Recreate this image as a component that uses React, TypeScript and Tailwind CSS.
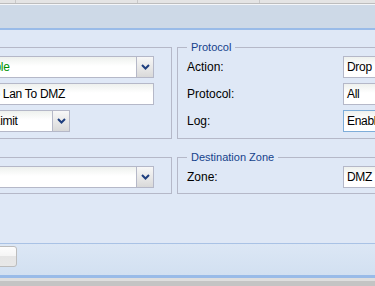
import React from 'react';

const font = { fontFamily: '"Liberation Sans", Arial, sans-serif' };

const Chevron = () => (
  <svg width="9" height="6" viewBox="0 0 9 6" className="block">
    <path d="M1 1 L4.5 4.5 L8 1" fill="none" stroke="#1f3f7f" strokeWidth="2" />
  </svg>
);

interface FieldProps {
  value?: string;
  width: number;
  combo?: boolean;
  green?: boolean;
  focus?: boolean;
}

const Field = ({ value = '', width, combo, green, focus }: FieldProps) => (
  <div
    className={`flex h-[22px] flex-none border ${focus ? 'border-[#7eadd9]' : 'border-[#b5b8c8]'} bg-[linear-gradient(to_bottom,#eef1ee,#ffffff_45%)]`}
    style={{ width }}
  >
    <div
      className={`flex-1 overflow-hidden whitespace-nowrap pl-[3px] text-[12px] leading-[20px] tracking-[-0.3px] ${green ? 'text-[#009000]' : 'text-black'}`}
    >
      {value}
    </div>
    {combo && (
      <div className="flex w-[17px] flex-none items-center justify-center border-l border-[#b5b8c8] bg-[linear-gradient(to_bottom,#f8f8f8,#e9e9e9_50%,#d9d9d9)]">
        <Chevron />
      </div>
    )}
  </div>
);

const Row = ({ label, labelWidth, children }: { label: string; labelWidth: number; children: React.ReactNode }) => (
  <div className="flex h-[22px] items-center">
    <div className="flex-none text-[12px] text-black" style={{ width: labelWidth }}>
      {label}
    </div>
    {children}
  </div>
);

const Legend = ({ text }: { text: string }) => (
  <legend className="px-[4px] text-[11px] leading-[13px] text-[#15428b]">{text}</legend>
);

export default function App() {
  return (
    <div className="flex h-[286px] w-[375px] flex-col overflow-hidden bg-[#dfe8f6]" style={font}>
      {/* grid header strip */}
      <div className="flex h-[3px] flex-none bg-[#e4e4e4]">
        <div className="w-[16px] border-r border-[#c9c9c9]" />
        <div className="w-[122px] border-r border-[#c9c9c9]" />
        <div className="w-[122px] border-r border-[#c9c9c9]" />
      </div>
      <div className="h-px flex-none bg-[#bdbdbd]" />
      <div className="h-px flex-none bg-[#f4f6f9]" />
      <div className="h-[23px] flex-none bg-[#cdd9e7]" />
      <div className="h-[2px] flex-none bg-[#99bbe8]" />

      {/* form body */}
      <div className="h-[213px] flex-none pt-[11px]">
        <div className="flex items-start">
          <fieldset className="ml-[-129px] w-[301px] flex-none border border-[#b5b8c8] pb-[6px] pl-[9px] pt-[2px]">
            <Legend text="General" />
            <div className="flex flex-col gap-[5px]">
              <Row label="Status:" labelWidth={89}>
                <Field value="Enable" width={184} combo green />
              </Row>
              <Row label="Name:" labelWidth={90}>
                <Field value="Drop Lan To DMZ" width={183} />
              </Row>
              <Row label="Rate:" labelWidth={91}>
                <Field value="No Limit" width={98} combo />
              </Row>
            </div>
          </fieldset>
          <fieldset className="ml-[5px] w-[300px] flex-none border border-[#b5b8c8] pb-[6px] pl-[9px] pt-[2px]">
            <Legend text="Protocol" />
            <div className="flex flex-col gap-[5px]">
              <Row label="Action:" labelWidth={156}>
                <Field value="Drop" width={120} />
              </Row>
              <Row label="Protocol:" labelWidth={156}>
                <Field value="All" width={120} />
              </Row>
              <Row label="Log:" labelWidth={156}>
                <Field value="Enable" width={120} focus />
              </Row>
            </div>
          </fieldset>
        </div>

        <div className="mt-[12px] flex items-start">
          <fieldset className="ml-[-129px] w-[301px] flex-none border border-[#b5b8c8] pb-[5px] pl-[9px] pt-[2px]">
            <Legend text="Source Zone" />
            <Row label="Zone:" labelWidth={89}>
              <Field value="" width={184} combo />
            </Row>
          </fieldset>
          <fieldset className="ml-[5px] w-[300px] flex-none border border-[#b5b8c8] pb-[5px] pl-[9px] pt-[2px]">
            <Legend text="Destination Zone" />
            <Row label="Zone:" labelWidth={156}>
              <Field value="DMZ" width={120} />
            </Row>
          </fieldset>
        </div>
      </div>

      {/* footer toolbar */}
      <div className="h-px flex-none bg-[#a9c2e5]" />
      <div className="flex h-[31px] flex-none items-start bg-[linear-gradient(to_bottom,#dce7f5,#d2e0f1)] pt-[2px]">
        <button className="ml-[-63px] h-[21px] w-[80px] flex-none rounded-[3px] border border-[#bcbcbc] bg-[linear-gradient(to_bottom,#fdfdfd,#f4f4f4_50%,#e5e5e5_50%,#e8e8e8)] text-[11px]">
          Save
        </button>
      </div>
      <div className="h-[3px] flex-none bg-[#99bbe8]" />
      <div className="h-[3px] flex-none bg-[#dedede]" />
      <div className="flex-1 bg-[#c4c4c4]" />
    </div>
  );
}
